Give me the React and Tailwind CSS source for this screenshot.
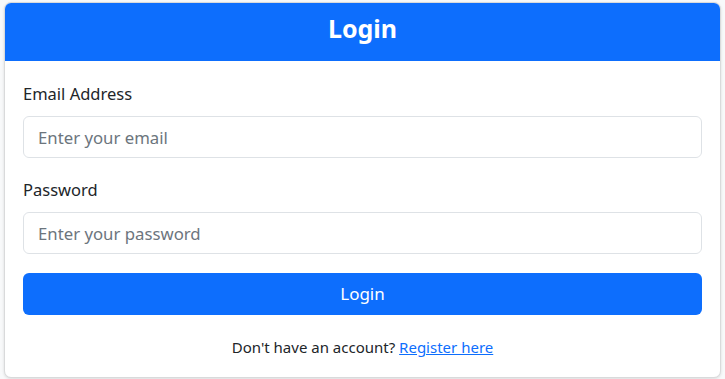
import React, { useState } from 'react';

export default function App() {
  const [email, setEmail] = useState('');
  const [password, setPassword] = useState('');

  return (
    <div
      className="min-h-screen bg-[#f8f9fa] px-[4px] pt-[2px] text-[#212529]"
      style={{ fontFamily: '"Noto Sans", "Open Sans", sans-serif' }}
    >
      <div className="overflow-hidden rounded-[7px] border border-[#d9dadb] bg-white shadow-[0_1px_3px_rgba(0,0,0,0.12)]">
        {/* Header */}
        <div className="flex h-[58px] items-center justify-center bg-[#0d6efd] pb-[7px]">
          <h3 className="text-[25px] font-bold leading-none text-white">Login</h3>
        </div>

        {/* Body */}
        <form className="px-[18px] pb-[19px] pt-[21px]" onSubmit={(e) => e.preventDefault()}>
          <label className="block text-[16.5px] leading-[24px]">Email Address</label>
          <input
            type="email"
            value={email}
            onChange={(e) => setEmail(e.target.value)}
            placeholder="Enter your email"
            className="mt-[10px] block h-[42px] w-full rounded-[6px] border border-[#dee2e6] px-[14px] text-[16.75px] outline-none placeholder:text-[#6c757d]"
          />

          <label className="mt-[20px] block text-[16.5px] leading-[24px]">Password</label>
          <input
            type="password"
            value={password}
            onChange={(e) => setPassword(e.target.value)}
            placeholder="Enter your password"
            className="mt-[10px] block h-[42px] w-full rounded-[6px] border border-[#dee2e6] px-[14px] text-[16.75px] outline-none placeholder:text-[#6c757d]"
          />

          <button
            type="submit"
            className="mt-[19px] flex h-[42px] w-full items-center justify-center rounded-[6px] bg-[#0d6efd] text-[17px] text-white"
          >
            Login
          </button>

          <p className="mt-[21px] text-center text-[15px] leading-[22px]">
            Don't have an account?{' '}
            <a href="#" className="text-[#0d6efd] underline">
              Register here
            </a>
          </p>
        </form>
      </div>
    </div>
  );
}
